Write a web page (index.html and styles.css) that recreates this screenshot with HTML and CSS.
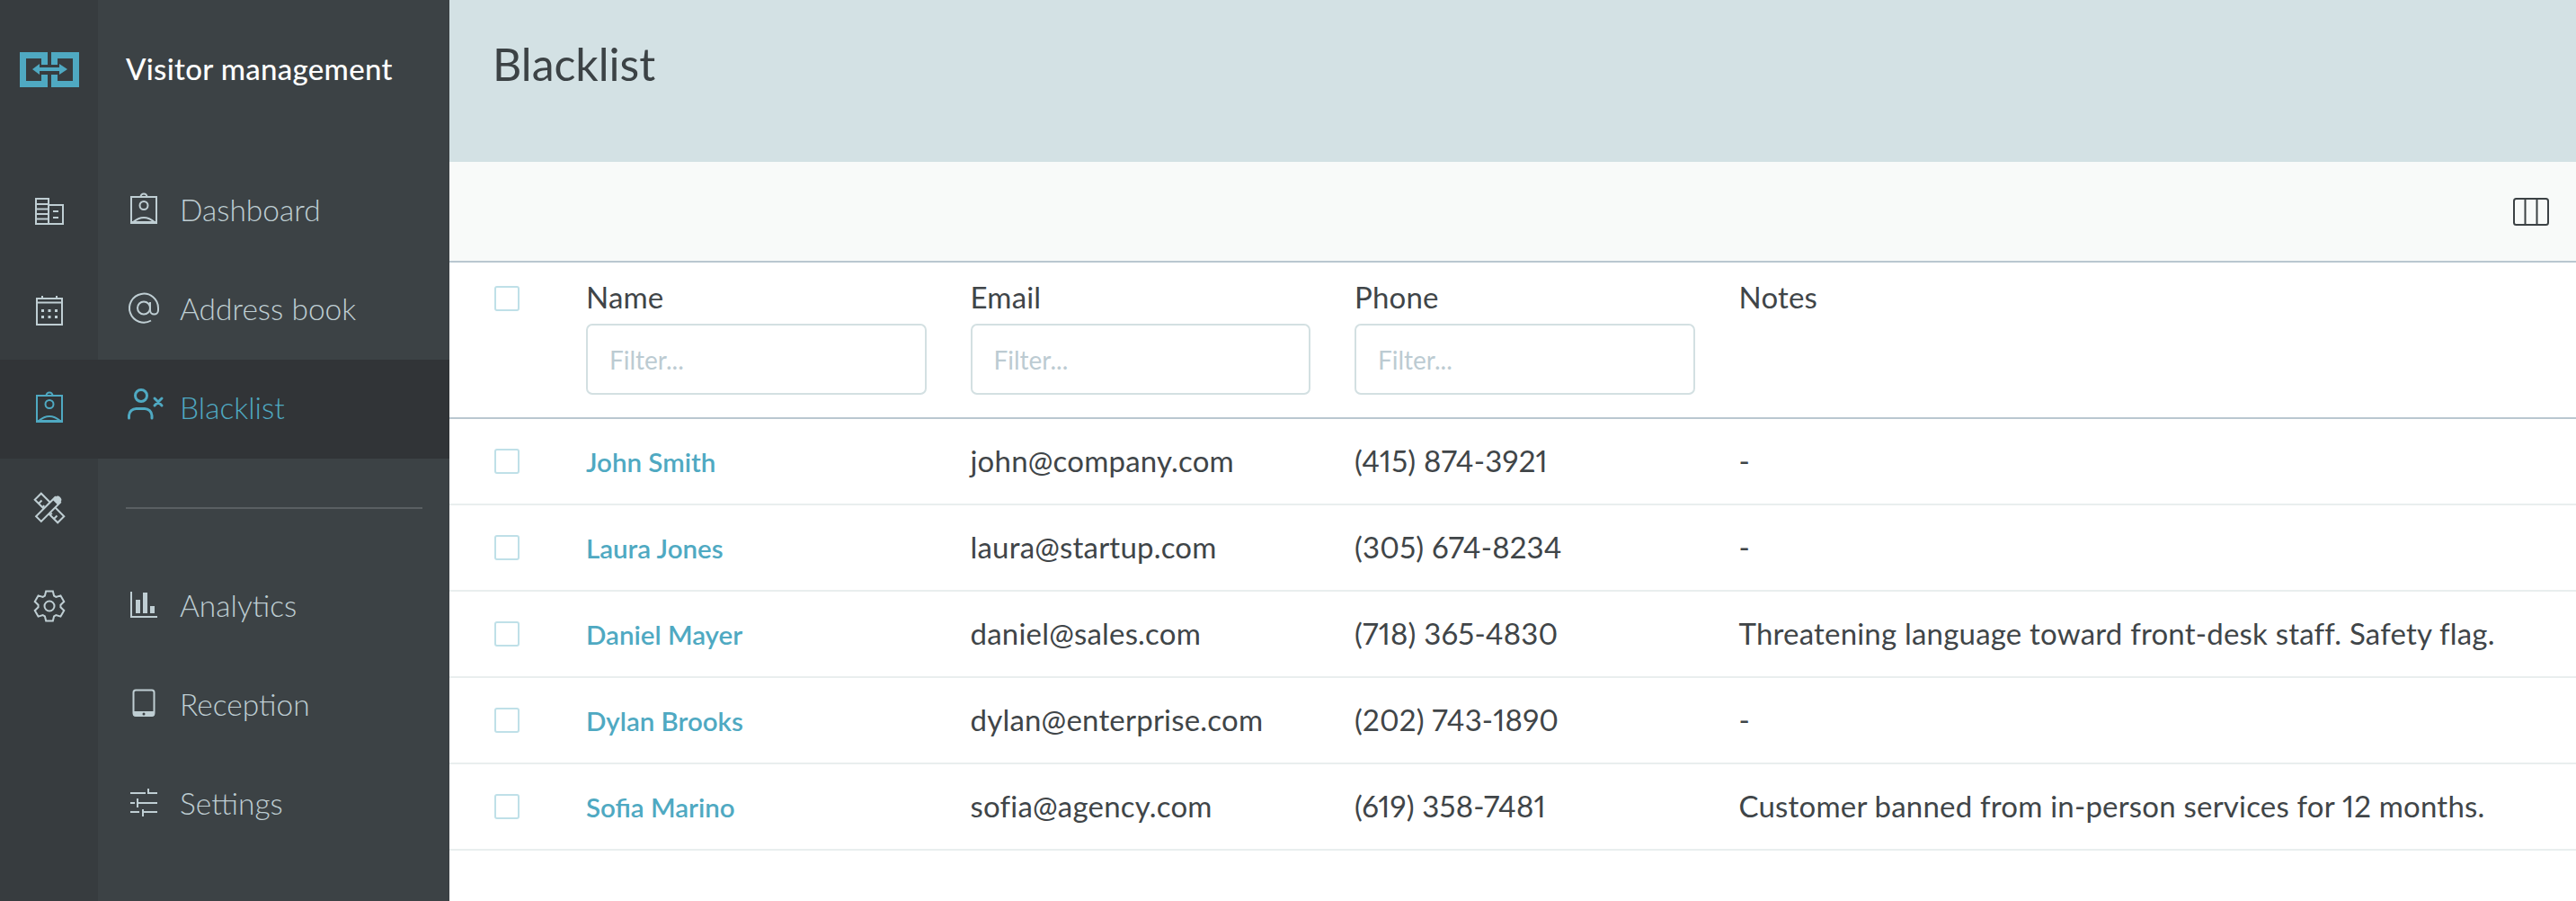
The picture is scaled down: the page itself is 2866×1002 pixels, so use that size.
FILE: index.html
```html
<!DOCTYPE html>
<html>
<head>
<meta charset="utf-8">
<title>Blacklist</title>
<link rel="stylesheet" href="styles.css">
</head>
<body>
<div id="wrap">
	<div id="sidebar">
		<div class="side_row logo_row">
			<div class="rail">
				<svg class="logo" width="66" height="39" viewBox="0 0 66 39">
					<path d="M0 0H31V14H24V7H7V32H24V25H31V39H0Z"/>
					<path d="M35 0H66V39H35V25H42V32H59V7H42V14H35Z"/>
					<path d="M14 19L22 13V17H44V13L53 19L44 25V21H22V25Z"/>
				</svg>
			</div>
			<div class="menu brand">Visitor management</div>
		</div>
		<div class="side_row">
			<div class="rail">
				<svg class="icon" viewBox="0 0 40 40">
					<path d="M5 6H19V34H5ZM5 12H19M5 17.500H19M5 23H19M5 28.500H19M19 13H35V34H19M24 20H30M24 27H30"/>
				</svg>
			</div>
			<div class="menu">
				<svg class="icon" viewBox="0 0 40 40">
					<path d="M6 4H34V33H6ZM16.500 4A3.500 3.500 0 0 1 23.500 4M8 32Q20 22 32 32"/>
					<circle cx="20" cy="13.500" r="4.500"/>
					<path class="thick" d="M6 32.500H34"/>
				</svg>
				<span class="label">Dashboard</span>
			</div>
		</div>
		<div class="side_row">
			<div class="rail">
				<svg class="icon" viewBox="0 0 40 40">
					<path d="M6 7H34V36H6ZM6 11.500H34M12 4V7M28 4V7"/>
					<path class="dots" d="M11 19h3v3h-3zM18.500 19h3v3h-3zM26 19h3v3h-3zM11 26h3v3h-3zM18.500 26h3v3h-3zM26 26h3v3h-3z"/>
				</svg>
			</div>
			<div class="menu">
				<svg class="icon" viewBox="0 0 40 40">
					<circle cx="20" cy="17.500" r="7"/>
					<path d="M27 11V20A4.500 4.500 0 0 0 36 20V17.500A16 16 0 1 0 28 31.500"/>
				</svg>
				<span class="label">Address book</span>
			</div>
		</div>
		<div class="side_row active">
			<div class="rail">
				<svg class="icon" viewBox="0 0 40 40">
					<path d="M6 5H34V34H6ZM16.500 5A3.500 3.500 0 0 1 23.500 5M8 33Q20 23 32 33"/>
					<circle cx="20" cy="14.500" r="4.500"/>
					<path class="thick" d="M6 33.500H34"/>
				</svg>
			</div>
			<div class="menu">
				<svg class="icon round" viewBox="0 0 40 40">
					<circle cx="17" cy="5" r="6.500"/>
					<path d="M3.500 30V27A8 8 0 0 1 11.500 19.500H21A8 8 0 0 1 29 27V30M32 8L40 16M40 8L32 16"/>
				</svg>
				<span class="label">Blacklist</span>
			</div>
		</div>
		<div class="side_row">
			<div class="rail">
				<svg class="icon" viewBox="0 0 40 40">
					<g transform="rotate(-45 20 20)">
						<path d="M15 2H25V38H15ZM15 8H20M15 14H18M15 26H18M15 32H20"/>
					</g>
					<g transform="rotate(45 20 20)">
						<path class="cover" d="M16 37H24V7H16Z"/>
						<path class="dots" d="M16 7A4 4 0 0 1 24 7V11H16Z"/>
					</g>
				</svg>
			</div>
			<div class="menu"><div class="divider"></div></div>
		</div>
		<div class="side_row">
			<div class="rail">
				<svg class="icon" viewBox="0 0 40 40">
					<g transform="translate(20 19)">
						<polygon points="-5.08,-11.42 -3.82,-16.56 3.82,-16.56 5.08,-11.42 7.35,-10.11 12.43,-11.59 16.25,-4.97 12.43,-1.31 12.43,1.31 16.25,4.97 12.43,11.59 7.35,10.11 5.08,11.42 3.82,16.56 -3.82,16.56 -5.08,11.42 -7.35,10.11 -12.43,11.59 -16.25,4.97 -12.43,1.31 -12.43,-1.31 -16.25,-4.97 -12.43,-11.59 -7.35,-10.11"/>
						<circle r="5.500"/>
					</g>
				</svg>
			</div>
			<div class="menu">
				<svg class="icon" viewBox="0 0 40 40">
					<path d="M6 3V31H35"/>
					<path class="dots" d="M11 12h5v15h-5zM19 4h5v23h-5zM27 19h5v8h-5z"/>
				</svg>
				<span class="label">Analytics</span>
			</div>
		</div>
		<div class="side_row">
			<div class="rail"></div>
			<div class="menu">
				<svg class="icon" viewBox="0 0 40 40">
					<rect x="8.500" y="2.500" width="23" height="28" rx="2.500"/>
					<path class="dots" d="M8 26H32V29A3 3 0 0 1 29 32H11A3 3 0 0 1 8 29Z"/>
					<circle class="dot_dark" cx="20" cy="29" r="1.500"/>
				</svg>
				<span class="label">Reception</span>
			</div>
		</div>
		<div class="side_row">
			<div class="rail"></div>
			<div class="menu">
				<svg class="icon" viewBox="0 0 40 40">
					<path d="M5 7H22M25 2V7H35M5 18H10M13 13V23M13 18H35M5 28H15M19 25V33M19 28H35"/>
				</svg>
				<span class="label">Settings</span>
			</div>
		</div>
		<div class="side_row filler">
			<div class="rail"></div>
			<div class="menu"></div>
		</div>
	</div>
	<div id="main">
		<div class="page_head"><h1>Blacklist</h1></div>
		<div class="toolbar">
			<svg class="columns" width="40" height="31" viewBox="0 0 40 31">
				<rect x="1" y="1" width="38" height="29" rx="2.500"/>
				<path d="M13.500 1V30M26.500 1V30"/>
			</svg>
		</div>
		<table>
			<colgroup>
				<col class="col_check">
				<col class="col_data">
				<col class="col_data">
				<col class="col_data">
				<col>
			</colgroup>
			<thead>
				<tr>
					<th><span class="check"></span></th>
					<th>Name<input type="text" placeholder="Filter..."></th>
					<th>Email<input type="text" placeholder="Filter..."></th>
					<th>Phone<input type="text" placeholder="Filter..."></th>
					<th>Notes</th>
				</tr>
			</thead>
			<tbody>
				<tr>
					<td><span class="check"></span></td>
					<td><a href="#">John Smith</a></td>
					<td>john@company.com</td>
					<td>(415) 874-3921</td>
					<td>-</td>
				</tr>
				<tr>
					<td><span class="check"></span></td>
					<td><a href="#">Laura Jones</a></td>
					<td>laura@startup.com</td>
					<td>(305) 674-8234</td>
					<td>-</td>
				</tr>
				<tr>
					<td><span class="check"></span></td>
					<td><a href="#">Daniel Mayer</a></td>
					<td>daniel@sales.com</td>
					<td>(718) 365-4830</td>
					<td>Threatening language toward front-desk staff. Safety flag.</td>
				</tr>
				<tr>
					<td><span class="check"></span></td>
					<td><a href="#">Dylan Brooks</a></td>
					<td>dylan@enterprise.com</td>
					<td>(202) 743-1890</td>
					<td>-</td>
				</tr>
				<tr>
					<td><span class="check"></span></td>
					<td><a href="#">Sofia Marino</a></td>
					<td>sofia@agency.com</td>
					<td>(619) 358-7481</td>
					<td>Customer banned from in-person services for 12 months.</td>
				</tr>
			</tbody>
		</table>
	</div>
</div>
</body>
</html>
```

FILE: styles.css
```css
html, body {
	margin:0;
	height:100%;
	background:#fff;
	font-family:"Lato", "Liberation Sans", sans-serif;
}
#wrap {
	display:flex;
	height:1002px;
	overflow:hidden;
}

/* sidebar */
#sidebar {
	width:500px;
	flex:none;
	display:flex;
	flex-direction:column;
	background:#3c4245;
}
.side_row {
	display:flex;
	height:110px;
	flex:none;
	color:#bfced3;
}
.logo_row {
	height:180px;
}
.filler {
	flex:1;
}
.rail {
	width:109px;
	flex:none;
	display:flex;
	align-items:center;
	justify-content:center;
	background:#373c3f;
}
.menu {
	flex:1;
	display:flex;
	align-items:center;
	gap:20px;
	padding:0 30px 0 31px;
	min-width:0;
}
.active {
	color:#4fa9c2;
	background:#313437;
}
.active .rail {
	background:transparent;
}
.logo_row .rail {
	padding-bottom:25px;
	box-sizing:border-box;
}
.logo path {
	fill:#4fa9c2;
}
.brand {
	padding-bottom:29px;
	color:#fff;
	font-size:33px;
	font-weight:500;
	letter-spacing:.3px;
	white-space:nowrap;
}
.label {
	font-size:33.500px;
	font-weight:300;
	padding-bottom:4px;
	white-space:nowrap;
}
.divider {
	width:100%;
	height:2px;
	background:#5a5f62;
}

.icon {
	width:40px;
	height:40px;
	flex:none;
	overflow:visible;
}
.icon path, .icon circle, .icon rect, .icon polygon {
	fill:none;
	stroke:currentColor;
	stroke-width:2;
}
.icon .thick {
	stroke-width:3;
}
.icon .dots {
	fill:currentColor;
	stroke:none;
}
.icon .cover {
	fill:#373c3f;
}
.icon .dot_dark {
	fill:#3c4245;
	stroke:none;
}
.round path, .round circle {
	stroke-width:3;
	stroke-linecap:round;
}

/* main part */
#main {
	flex:1;
	min-width:0;
}
.page_head {
	height:180px;
	box-sizing:border-box;
	padding:41px 48px 0;
	background:#d3e1e4;
}
h1 {
	margin:0;
	font-size:50px;
	font-weight:400;
	line-height:60px;
	color:#3c4245;
}
.toolbar {
	height:112px;
	box-sizing:border-box;
	padding:40px 30px 0 0;
	display:flex;
	justify-content:flex-end;
	align-items:flex-start;
	background:#f8faf9;
	border-bottom:2px solid #b9c7d0;
}
.columns rect, .columns path {
	fill:none;
	stroke:#3c4245;
	stroke-width:2;
}

table {
	width:100%;
	table-layout:fixed;
	border-collapse:collapse;
	color:#404548;
	font-size:33px;
	font-weight:400;
	letter-spacing:.2px;
	font-variant-numeric:proportional-nums;
}
.col_check {
	width:152px;
}
.col_data {
	width:427.500px;
}
th {
	height:173px;
	box-sizing:border-box;
	padding:18px 49px 0 0;
	text-align:left;
	vertical-align:top;
	font-weight:400;
	line-height:40px;
	border-bottom:2px solid #b9c7d0;
}
td {
	height:96px;
	box-sizing:border-box;
	padding:0 49px 2px 0;
	border-bottom:2px solid #e9eeee;
	white-space:nowrap;
}
th:first-child, td:first-child {
	padding-left:50px;
}
th:last-child, td:last-child {
	padding-right:0;
}
td a {
	color:#4fa9c2;
	font-weight:600;
	font-size:29.500px;
	letter-spacing:0;
	text-decoration:none;
}
.check {
	display:block;
	width:28px;
	height:28px;
	box-sizing:border-box;
	border:2px solid #bfe0e8;
	border-radius:3px;
}
th .check {
	margin-top:8px;
}
td .check {
	margin-top:2px;
}
input {
	display:block;
	width:100%;
	height:79px;
	box-sizing:border-box;
	margin-top:10px;
	padding:0 24px;
	border:2px solid #d3e0e2;
	border-radius:7px;
	background:#fff;
	font-family:inherit;
	font-size:28px;
	letter-spacing:0;
}
input::placeholder {
	color:#bccbd2;
	font-weight:400;
	opacity:1;
}
```
